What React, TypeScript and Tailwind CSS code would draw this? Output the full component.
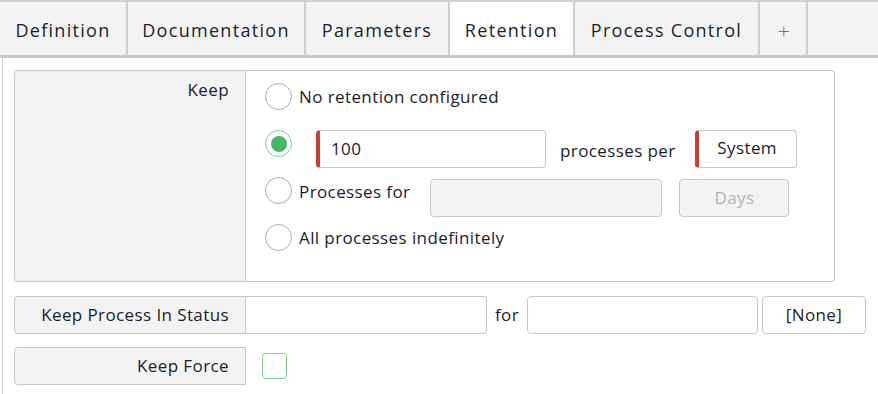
import { useState } from "react";

const tabs = [
  { label: "Definition", w: "w-[128px]" },
  { label: "Documentation", w: "w-[178px]" },
  { label: "Parameters", w: "w-[144px]" },
  { label: "Retention", w: "w-[125px]", active: true },
  { label: "Process Control", w: "w-[185px]" },
  { label: "+", w: "w-[48px]", plus: true },
];

const Radio = ({ checked, onClick }: { checked?: boolean; onClick?: () => void }) => (
  <button
    type="button"
    onClick={onClick}
    className={`flex h-[27px] w-[27px] shrink-0 items-center justify-center rounded-full border bg-white ${
      checked ? "border-[#74cd91]" : "border-[#a9a9a9]"
    }`}
  >
    {checked && <span className="h-[16px] w-[16px] rounded-full bg-[#45b86a]" />}
  </button>
);

const Label = ({ children, tall }: { children: React.ReactNode; tall?: boolean }) => (
  <div
    className={`flex w-[232px] shrink-0 justify-end rounded-l-[4px] border border-[#c6c6c6] bg-[#f3f3f3] pr-[16px] ${
      tall ? "h-[212px] items-start pt-[6px]" : "h-[38px] items-center"
    }`}
  >
    {children}
  </div>
);

export default function App() {
  const [keep, setKeep] = useState(1);

  return (
    <div className="h-[394px] w-[878px] overflow-hidden bg-white font-['Open_Sans',sans-serif] text-[17px] tracking-[0.4px] text-[#1c1d2b]">
      {/* tab strip */}
      <div className="flex h-[58px] border-t-2 border-b-[3px] border-[#c9c9c9] border-t-[#d0d0d0] bg-[#f3f3f3]">
        {tabs.map((t) => (
          <div
            key={t.label}
            className={`flex h-full items-center justify-center border-r-2 border-[#cfcfcf] pt-[4px] ${t.w} ${
              t.active ? "bg-white" : "bg-[#f3f3f3]"
            } ${t.plus ? "pl-[2px] text-[22px] font-light text-[#777777]" : "text-[18px] tracking-[1.3px]"}`}
          >
            {t.label}
          </div>
        ))}
      </div>

      {/* content */}
      <div className="ml-[2px] h-full border-l border-[#cfcfcf] pl-[11px] pt-[12px]">
        <div className="flex">
          <Label tall>Keep</Label>
          <div className="flex h-[212px] w-[589px] flex-col rounded-r-[4px] border border-l-0 border-[#c6c6c6] pl-[19px] pt-[12px]">
            <div className="flex items-center gap-[7px]">
              <Radio checked={keep === 0} onClick={() => setKeep(0)} />
              <span>No retention configured</span>
            </div>

            <div className="mt-[20px] flex">
              <Radio checked={keep === 1} onClick={() => setKeep(1)} />
              <div className="ml-[24px] flex h-[38px] w-[230px] items-center rounded-[4px] border border-[#c6c6c6] border-l-[4px] border-l-[#cf3a2f] pl-[11px]">
                100
              </div>
              <span className="ml-[14px] self-center pt-[4px]">processes per</span>
              <button
                type="button"
                className="ml-[19px] flex h-[38px] w-[102px] items-center justify-center rounded-[4px] border border-[#c6c6c6] border-l-[4px] border-l-[#cf3a2f] pb-[3px]"
              >
                System
              </button>
            </div>

            <div className="mt-[9px] flex">
              <Radio checked={keep === 2} onClick={() => setKeep(2)} />
              <span className="ml-[7px] mt-[2px]">Processes for</span>
              <div className="ml-[20px] mt-[2px] h-[38px] w-[232px] rounded-[4px] border border-[#c6c6c6] bg-[#f3f3f3]" />
              <button
                type="button"
                className="ml-[17px] mt-[2px] flex h-[38px] w-[110px] items-center justify-center rounded-[4px] border border-[#c6c6c6] bg-[#f3f3f3] text-[#b3b3b3]"
              >
                Days
              </button>
            </div>

            <div className="mt-[7px] flex items-center gap-[7px]">
              <Radio checked={keep === 3} onClick={() => setKeep(3)} />
              <span>All processes indefinitely</span>
            </div>
          </div>
        </div>

        <div className="mt-[14px] flex items-center">
          <Label>Keep Process In Status</Label>
          <div className="h-[38px] w-[241px] rounded-r-[4px] border border-l-0 border-[#c6c6c6]" />
          <span className="ml-[8px] w-[32px]">for</span>
          <div className="h-[38px] w-[231px] rounded-[4px] border border-[#c6c6c6]" />
          <button
            type="button"
            className="ml-[4px] flex h-[38px] w-[104px] items-center justify-center rounded-[4px] border border-[#c6c6c6]"
          >
            [None]
          </button>
        </div>

        <div className="mt-[13px] flex items-center">
          <Label>Keep Force</Label>
          <div className="ml-[16px] h-[26px] w-[25px] rounded-[3px] border-[1.5px] border-[#7fd49a]" />
        </div>
      </div>
    </div>
  );
}
